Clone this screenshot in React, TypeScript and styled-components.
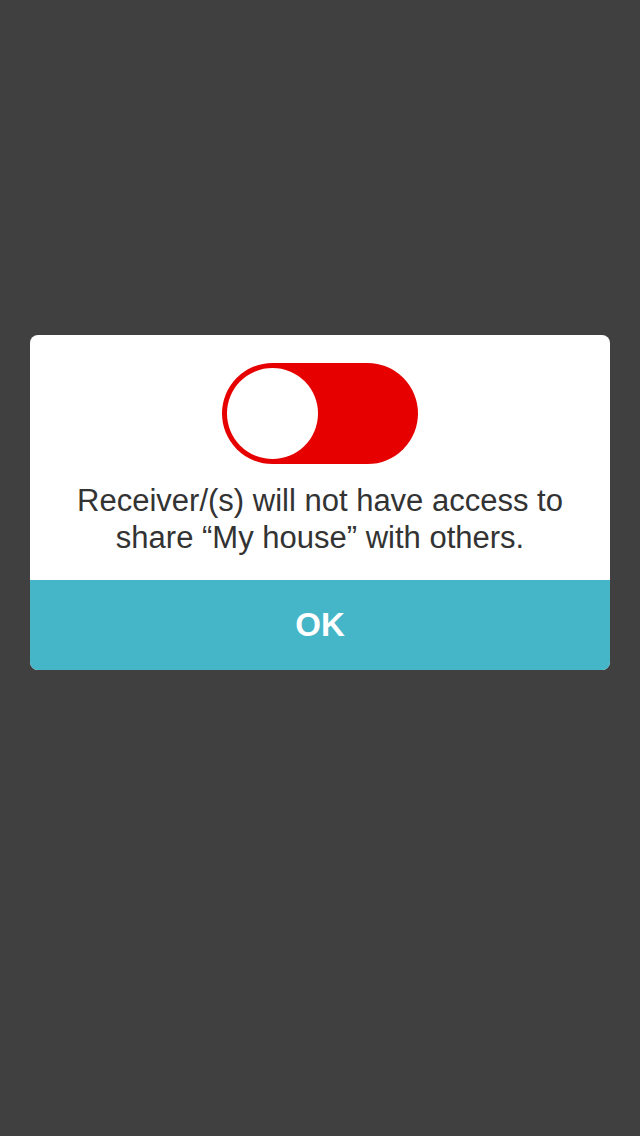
import styled, { createGlobalStyle } from "styled-components";

const GlobalStyle = createGlobalStyle`
  html, body {
    margin: 0;
    padding: 0;
    background: #404040;
  }
  body {
    font-family: "Liberation Sans", Arial, sans-serif;
  }
`;

const Screen = styled.div`
  width: 640px;
  height: 1136px;
  background: #404040;
  display: flex;
  align-items: flex-start;
  justify-content: center;
  padding-top: 335px;
  box-sizing: border-box;
`;

const Dialog = styled.div`
  width: 580px;
  background: #ffffff;
  border-radius: 8px;
  overflow: hidden;
  display: flex;
  flex-direction: column;
`;

const Body = styled.div`
  display: flex;
  flex-direction: column;
  align-items: center;
  padding: 28px 10px 24px;
  gap: 18px;
`;

const Track = styled.div<{ $on: boolean }>`
  width: 196px;
  height: 101px;
  border-radius: 51px;
  background: ${({ $on }) => ($on ? "#e60000" : "#ccc")};
  display: flex;
  align-items: center;
  justify-content: ${({ $on }) => ($on ? "flex-start" : "flex-end")};
  padding: 0 5px;
  box-sizing: border-box;
`;

const Knob = styled.div`
  width: 91px;
  height: 91px;
  border-radius: 50%;
  background: #ffffff;
`;

const Message = styled.p`
  margin: 0;
  font-size: 31px;
  line-height: 37px;
  color: #333333;
  text-align: center;
`;

const OkButton = styled.button`
  height: 90px;
  border: none;
  background: #45b5c8;
  color: #ffffff;
  font-family: "Liberation Sans", Arial, sans-serif;
  font-size: 33px;
  font-weight: 600;
  cursor: pointer;
  padding: 0;
`;

const App = () => {
  return (
    <>
      <GlobalStyle />
      <Screen>
        <Dialog>
          <Body>
            <Track $on>
              <Knob />
            </Track>
            <Message>
              Receiver/(s) will not have access to
              <br />
              share “My house” with others.
            </Message>
          </Body>
          <OkButton type="button">OK</OkButton>
        </Dialog>
      </Screen>
    </>
  );
};

export default App;
